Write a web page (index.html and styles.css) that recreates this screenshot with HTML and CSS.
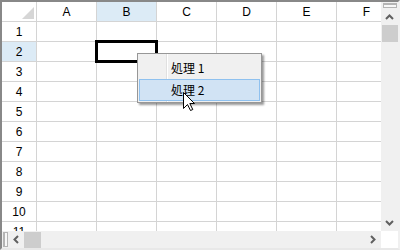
FILE: index.html
```html
<!DOCTYPE html>
<html lang="ja">
<head>
    <meta charset="UTF-8">
    <title>Grid Context Menu</title>
    <link rel="stylesheet" href="styles.css">
</head>
<body>
    <div class="frame">
        <div class="sheet">
            <div class="grid">
                <div class="hd corner"><span class="tri"></span></div>
                <div class="hd">A</div>
                <div class="hd sel">B</div>
                <div class="hd">C</div>
                <div class="hd">D</div>
                <div class="hd">E</div>
                <div class="hd">F</div>

                <div class="rh">1</div><div></div><div></div><div></div><div></div><div></div><div></div>
                <div class="rh sel">2</div><div></div><div></div><div></div><div></div><div></div><div></div>
                <div class="rh">3</div><div></div><div></div><div></div><div></div><div></div><div></div>
                <div class="rh">4</div><div></div><div></div><div></div><div></div><div></div><div></div>
                <div class="rh">5</div><div></div><div></div><div></div><div></div><div></div><div></div>
                <div class="rh">6</div><div></div><div></div><div></div><div></div><div></div><div></div>
                <div class="rh">7</div><div></div><div></div><div></div><div></div><div></div><div></div>
                <div class="rh">8</div><div></div><div></div><div></div><div></div><div></div><div></div>
                <div class="rh">9</div><div></div><div></div><div></div><div></div><div></div><div></div>
                <div class="rh">10</div><div></div><div></div><div></div><div></div><div></div><div></div>
                <div class="rh">11</div><div></div><div></div><div></div><div></div><div></div><div></div>
            </div>
            <div class="current"></div>
        </div>

        <div class="vscroll">
            <div class="split-v"></div>
            <div class="btn">
                <svg width="9" height="6" viewBox="0 0 9 6"><path d="M1 5 L4.5 1.5 L8 5" fill="none" stroke="#606060" stroke-width="2"/></svg>
            </div>
            <div class="thumb-v"></div>
            <div class="fill"></div>
            <div class="btn">
                <svg width="9" height="6" viewBox="0 0 9 6"><path d="M1 1 L4.5 4.5 L8 1" fill="none" stroke="#606060" stroke-width="2"/></svg>
            </div>
        </div>

        <div class="hscroll">
            <div class="split-h"></div>
            <div class="btn">
                <svg width="6" height="9" viewBox="0 0 6 9"><path d="M5 1 L1.5 4.5 L5 8" fill="none" stroke="#606060" stroke-width="2"/></svg>
            </div>
            <div class="thumb-h"></div>
            <div class="fill"></div>
            <div class="btn">
                <svg width="6" height="9" viewBox="0 0 6 9"><path d="M1 1 L4.5 4.5 L1 8" fill="none" stroke="#606060" stroke-width="2"/></svg>
            </div>
        </div>

        <div class="box"></div>

        <!-- popup menu -->
        <div class="menu">
            <div class="item">処理 1</div>
            <div class="item hover">処理 2</div>
        </div>

        <svg class="cursor" width="13" height="20" viewBox="0 0 13 20">
            <path d="M0.5 0.5 L0.5 16.5 L4.5 12.5 L7.5 18.5 L9.8 17.5 L6.8 11.5 L11.5 11.5 Z" fill="#fff" stroke="#000" stroke-width="1" stroke-linejoin="miter"/>
        </svg>
    </div>
</body>
</html>
```

FILE: styles.css
```css
body {
    margin: 0;
    font-family: "Liberation Sans", Arial, sans-serif;
    background: #fff;
}
.frame {
    position: relative;
    width: 400px;
    height: 250px;
    box-sizing: border-box;
    border-top: 2px solid #888;
    border-left: 2px solid #888;
    border-right: 2px solid #f0f0f0;
    border-bottom: 2px solid #e8e8e8;
    display: grid;
    grid-template-columns: 1fr 17px;
    grid-template-rows: 1fr 17px;
}
.sheet {
    position: relative;
    overflow: hidden;
}
.grid {
    display: grid;
    grid-template-columns: 35px repeat(6, 60px);
    grid-auto-rows: 20px;
    font-size: 12px;
    color: #000;
}
.grid > div {
    box-sizing: border-box;
    border-right: 1px solid #d4d4d4;
    border-bottom: 1px solid #d4d4d4;
}
.hd, .rh {
    display: flex;
    align-items: center;
    justify-content: center;
}
.sel {
    background: #dcebf6;
}
.corner {
    position: relative;
}
.tri {
    position: absolute;
    right: 2px;
    bottom: 2px;
    width: 0;
    height: 0;
    border-left: 12px solid transparent;
    border-bottom: 12px solid #d6d6d6;
}
.current {
    position: absolute;
    left: 93px;
    top: 38px;
    width: 63px;
    height: 23px;
    box-sizing: border-box;
    border: 3px solid #000;
}

/* scrollbars */
.vscroll {
    background: #f0f0f0;
    display: flex;
    flex-direction: column;
}
.hscroll {
    background: #f0f0f0;
    display: flex;
}
.btn {
    display: flex;
    align-items: center;
    justify-content: center;
}
.vscroll .btn {
    height: 16px;
}
.vscroll .btn:last-child {
    height: 17px;
}
.hscroll .btn {
    width: 16px;
}
.hscroll .btn:last-child {
    width: 17px;
}
.fill {
    flex: 1;
}
.split-v {
    height: 5px;
    margin: 1px 1px 1px 2px;
    border: 1px solid #b4b4b4;
    border-top-width: 2px;
    box-sizing: border-box;
    background: #f8f8f8;
}
.split-h {
    width: 5px;
    margin: 1px 0 1px 1px;
    border: 1px solid #b4b4b4;
    border-left-width: 2px;
    box-sizing: border-box;
    background: #f8f8f8;
}
.thumb-v {
    height: 17px;
    margin: 0 0 0 1px;
    background: #cdcdcd;
}
.thumb-h {
    width: 17px;
    margin: 1px 0 0 0;
    background: #cdcdcd;
}
.box {
    background: #fff;
}

/* context menu */
.menu {
    position: absolute;
    left: 135px;
    top: 51px;
    width: 125px;
    box-sizing: border-box;
    padding: 3px 1px 1px;
    background: #f0f0f0;
    border: 1px solid #979797;
    box-shadow: 2px 2px 2px rgba(0, 0, 0, 0.4);
    font-family: "Noto Sans CJK JP", "Noto Sans", sans-serif;
    font-size: 12px;
}
.menu::before {
    content: "";
    position: absolute;
    left: 28px;
    top: 0;
    bottom: 0;
    width: 1px;
    background: #e0e0e0;
    border-right: 1px solid #fff;
}
.item {
    position: relative;
    height: 22px;
    box-sizing: border-box;
    border: 1px solid transparent;
    padding-left: 31px;
    line-height: 20px;
    color: #000;
}
.item.hover {
    background: #d1e3f4;
    border-color: #8fc1ef;
}
.cursor {
    position: absolute;
    left: 181px;
    top: 90px;
}
```
